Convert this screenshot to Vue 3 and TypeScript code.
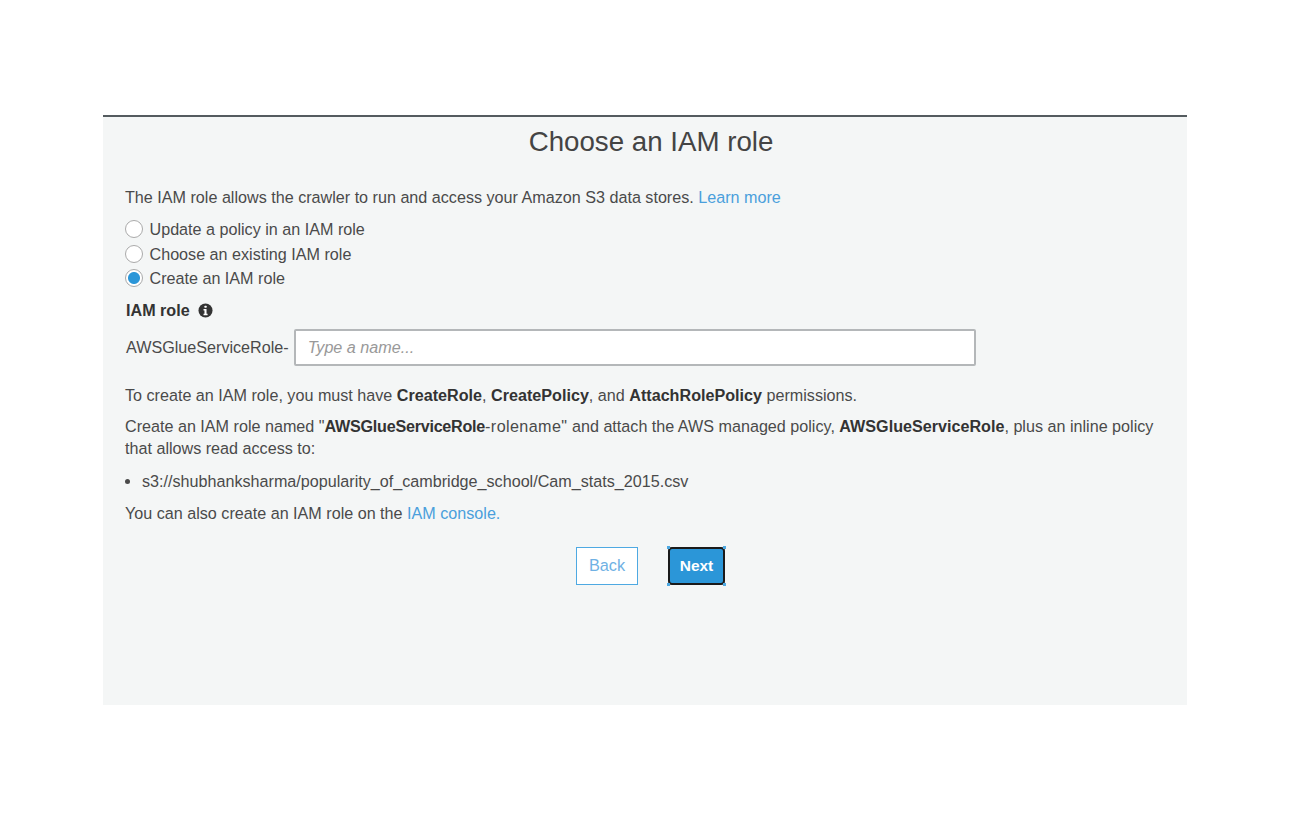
<script setup lang="ts">
const options = [
  { label: 'Update a policy in an IAM role', checked: false },
  { label: 'Choose an existing IAM role', checked: false },
  { label: 'Create an IAM role', checked: true },
]
</script>

<template>
  <div class="page">
    <section class="panel">
      <h1 class="title">Choose an IAM role</h1>
      <p class="intro">
        The IAM role allows the crawler to run and access your Amazon S3 data stores.
        <a class="link">Learn more</a>
      </p>
      <div class="radios">
        <label v-for="o in options" :key="o.label" class="radio-row">
          <span class="radio" :class="{ on: o.checked }"></span>
          <span>{{ o.label }}</span>
        </label>
      </div>
      <div class="field-label">
        <b>IAM role</b>
        <svg class="info" viewBox="0 0 16 16" width="15" height="15" aria-hidden="true">
          <circle cx="8" cy="8" r="7.5" fill="#333" />
          <rect x="6.9" y="2.8" width="2.3" height="2.3" rx="0.6" fill="#fff" />
          <path d="M5.9 6.5h3.2v5h1.1v1.5H5.9v-1.5h1V8h-1z" fill="#fff" />
        </svg>
      </div>
      <div class="name-row">
        <span class="prefix">AWSGlueServiceRole-</span>
        <input class="name-input" type="text" placeholder="Type a name..." />
      </div>
      <p class="perm">
        To create an IAM role, you must have <b>CreateRole</b>, <b>CreatePolicy</b>, and
        <b>AttachRolePolicy</b> permissions.
      </p>
      <p class="desc">
        Create an IAM role named "<b class="tight">AWSGlueServiceRole</b><span class="loose">-rolename"</span> and attach the AWS managed policy,
        <b>AWSGlueServiceRole</b>, plus an inline policy that allows read access to:
      </p>
      <ul class="paths">
        <li>s3://shubhanksharma/popularity_of_cambridge_school/Cam_stats_2015.csv</li>
      </ul>
      <p class="console">You can also create an IAM role on the <a class="link">IAM console.</a></p>
      <div class="actions">
        <button class="btn back" type="button">Back</button>
        <span class="focus-wrap">
          <button class="btn next" type="button">Next</button>
          <i class="dot tl"></i><i class="dot tr"></i><i class="dot bl"></i><i class="dot br"></i>
        </span>
      </div>
    </section>
  </div>
</template>

<style scoped>
.page {
  width: 1290px;
  height: 820px;
  padding: 115px 103px 0;
  box-sizing: border-box;
  background: #fff;
  font-family: "Liberation Sans", Arial, sans-serif;
  font-size: 16.15px;
  line-height: 22px;
  color: #4a4a4a;
}
.panel {
  height: 590px;
  box-sizing: border-box;
  background: #f4f6f6;
  border-top: 2px solid #545b5f;
  padding: 0 22px;
}
.title {
  margin: 8px 0 0;
  padding-left: 12px;
  text-align: center;
  font-size: 27.7px;
  line-height: 34px;
  font-weight: 400;
  color: #444;
}
p { margin: 0; }
.intro { margin-top: 27px; }
.link { color: #4a9fdc; }
.radios { margin-top: 10px; display: flex; flex-direction: column; gap: 2.5px; }
.radio-row { display: flex; align-items: center; gap: 6.5px; height: 22px; }
.radio {
  width: 18px;
  height: 18px;
  box-sizing: border-box;
  border: 1.5px solid #aaa;
  border-radius: 50%;
  background: #fff;
}
.radio.on { background: radial-gradient(circle, #2b96d8 0 5.5px, #fff 6.5px); }
.field-label {
  margin: 10px 0 0 1px;
  display: flex;
  align-items: center;
  gap: 8px;
  color: #333;
}
.name-row { margin: 7.5px 0 0 1px; display: flex; align-items: center; gap: 5px; }
.name-input {
  width: 682px;
  height: 37px;
  box-sizing: border-box;
  border: 2px solid #b4b7b9;
  border-radius: 2px;
  background: #fff;
  padding: 0 12px;
  font: 16.15px "Liberation Sans", Arial, sans-serif;
  outline: none;
}
.name-input::placeholder { color: #999; font-style: italic; opacity: 1; }
.perm { margin-top: 18px; }
b { color: #333; font-weight: 700; }
.desc { margin-top: 9px; }
.tight { letter-spacing: -0.25px; }
.loose { letter-spacing: 0.4px; }
.paths { margin: 11px 0 0; padding-left: 17px; }
.console { margin-top: 10px; }
.actions {
  margin-top: 23px;
  display: flex;
  justify-content: center;
  gap: 30px;
  padding-left: 11px;
}
.btn {
  height: 38px;
  box-sizing: border-box;
  font: 16.3px "Liberation Sans", Arial, sans-serif;
  padding: 0;
}
.back {
  width: 62px;
  background: #fff;
  color: #6fb1e4;
  border: 1.5px solid #4ea9e2;
}
.focus-wrap { position: relative; display: block; }
.next {
  display: block;
  width: 57px;
  background: #2b96d8;
  color: #fff;
  font-size: 15.5px;
  font-weight: 700;
  border: 2.5px solid #1a1a1a;
  border-radius: 4px;
}
.dot { position: absolute; width: 3px; height: 3px; background: #4ea9e2; }
.tl { left: -1px; top: -1px; }
.tr { right: -1px; top: -1px; }
.bl { left: -1px; bottom: -1px; }
.br { right: -1px; bottom: -1px; }
</style>
